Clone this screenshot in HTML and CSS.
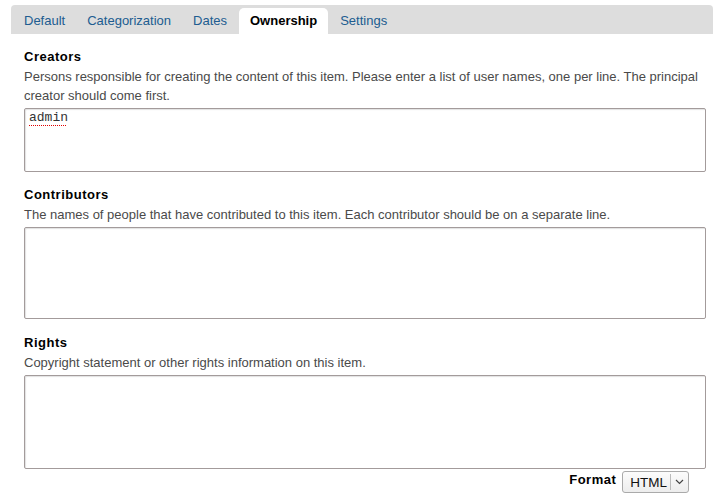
FILE: index.html
```html
<!DOCTYPE html>
<html>
<head>
<meta charset="utf-8">
<link rel="stylesheet" href="styles.css">
</head>
<body>
<div class="page">
  <nav class="tabs">
    <a class="tab">Default</a>
    <a class="tab">Categorization</a>
    <a class="tab">Dates</a>
    <a class="tab active">Ownership</a>
    <a class="tab">Settings</a>
  </nav>
  <div class="panel">
    <div class="field">
      <label class="label">Creators</label>
      <div class="help">Persons responsible for creating the content of this item. Please enter a list of user names, one per line. The principal creator should come first.</div>
      <textarea class="box box-creators spell" spellcheck="false">admin</textarea>
    </div>
    <div class="field field-mid">
      <label class="label">Contributors</label>
      <div class="help">The names of people that have contributed to this item. Each contributor should be on a separate line.</div>
      <textarea class="box box-tall"></textarea>
    </div>
    <div class="field field-last">
      <label class="label">Rights</label>
      <div class="help">Copyright statement or other rights information on this item.</div>
      <textarea class="box box-rights"></textarea>
      <div class="format-row">
        <span class="format-label">Format</span>
        <span class="select">
          <span class="select-value">HTML</span>
          <span class="select-arrow">
            <svg width="9" height="6" viewBox="0 0 9 6"><path d="M1 1 L4.5 4.5 L8 1" fill="none" stroke="#444" stroke-width="1.2"/></svg>
          </span>
        </span>
      </div>
    </div>
  </div>
</div>
</body>
</html>
```

FILE: styles.css
```css
html, body {
  margin: 0;
  padding: 0;
  background: #fff;
}
body {
  font-family: "Liberation Sans", Arial, sans-serif;
  color: #333;
}
.page {
  padding: 5px 11px 0 11px;
}
.tabs {
  display: flex;
  align-items: flex-end;
  height: 29px;
  background: #dddddd;
  border-radius: 4px 4px 0 0;
  padding-left: 2px;
}
.tab {
  display: flex;
  align-items: center;
  height: 26px;
  padding: 0 11px 2px 11px;
  font-size: 13px;
  color: #205c90;
  box-sizing: border-box;
}
.tab.active {
  background: #fff;
  color: #000;
  font-weight: bold;
  border-radius: 5px 5px 0 0;
  padding: 0 11px 2px 11px;
  margin-left: 1px;
  margin-right: 1px;
}
.panel {
  padding: 15px 7px 0 13px;
}
.field {
  display: flex;
  flex-direction: column;
  margin-bottom: 15px;
}
.field-mid {
  margin-bottom: 16px;
}
.label {
  font-size: 13px;
  font-weight: bold;
  color: #000;
  letter-spacing: 0.5px;
  line-height: 16px;
}
.help {
  font-size: 13px;
  line-height: 19px;
  color: #4a4a4a;
  margin-top: 2px;
}
.box {
  display: block;
  box-sizing: border-box;
  width: 100%;
  margin: 3px 0 0 0;
  border: 1px solid #a39b9b;
  border-radius: 2px;
  box-shadow: inset 1px 1px 1px rgba(0,0,0,0.12);
  resize: none;
  font-family: "Liberation Mono", "Courier New", monospace;
  font-size: 13px;
  line-height: 15px;
  padding: 1px 4px;
  color: #333;
  background-color: #fff;
}
.box-creators {
  height: 64px;
}
.box-tall {
  height: 92px;
}
.box-rights {
  height: 94px;
}
.spell {
  background-image: repeating-linear-gradient(to right, #e00000 0 1px, transparent 1px 2px);
  background-size: 38px 1px;
  background-repeat: no-repeat;
  background-position: 4px 16px;
}
.format-row {
  display: flex;
  justify-content: flex-end;
  align-items: center;
  gap: 6px;
  margin-top: 2px;
  padding-right: 17px;
}
.format-label {
  font-size: 13px;
  font-weight: bold;
  color: #000;
  letter-spacing: 0.5px;
  margin-top: -6px;
}
.select {
  display: flex;
  align-items: stretch;
  height: 22px;
  box-sizing: border-box;
  border: 1px solid #aaa;
  border-radius: 3px;
  background: linear-gradient(#fcfcfc, #ededed);
}
.select-value {
  display: flex;
  align-items: center;
  font-size: 13.5px;
  color: #111;
  padding: 0 3px 0 7px;
  border-right: 1px solid #bbb;
  margin: 2px 0;
}
.select-arrow {
  display: flex;
  align-items: center;
  justify-content: center;
  width: 17px;
}
```
